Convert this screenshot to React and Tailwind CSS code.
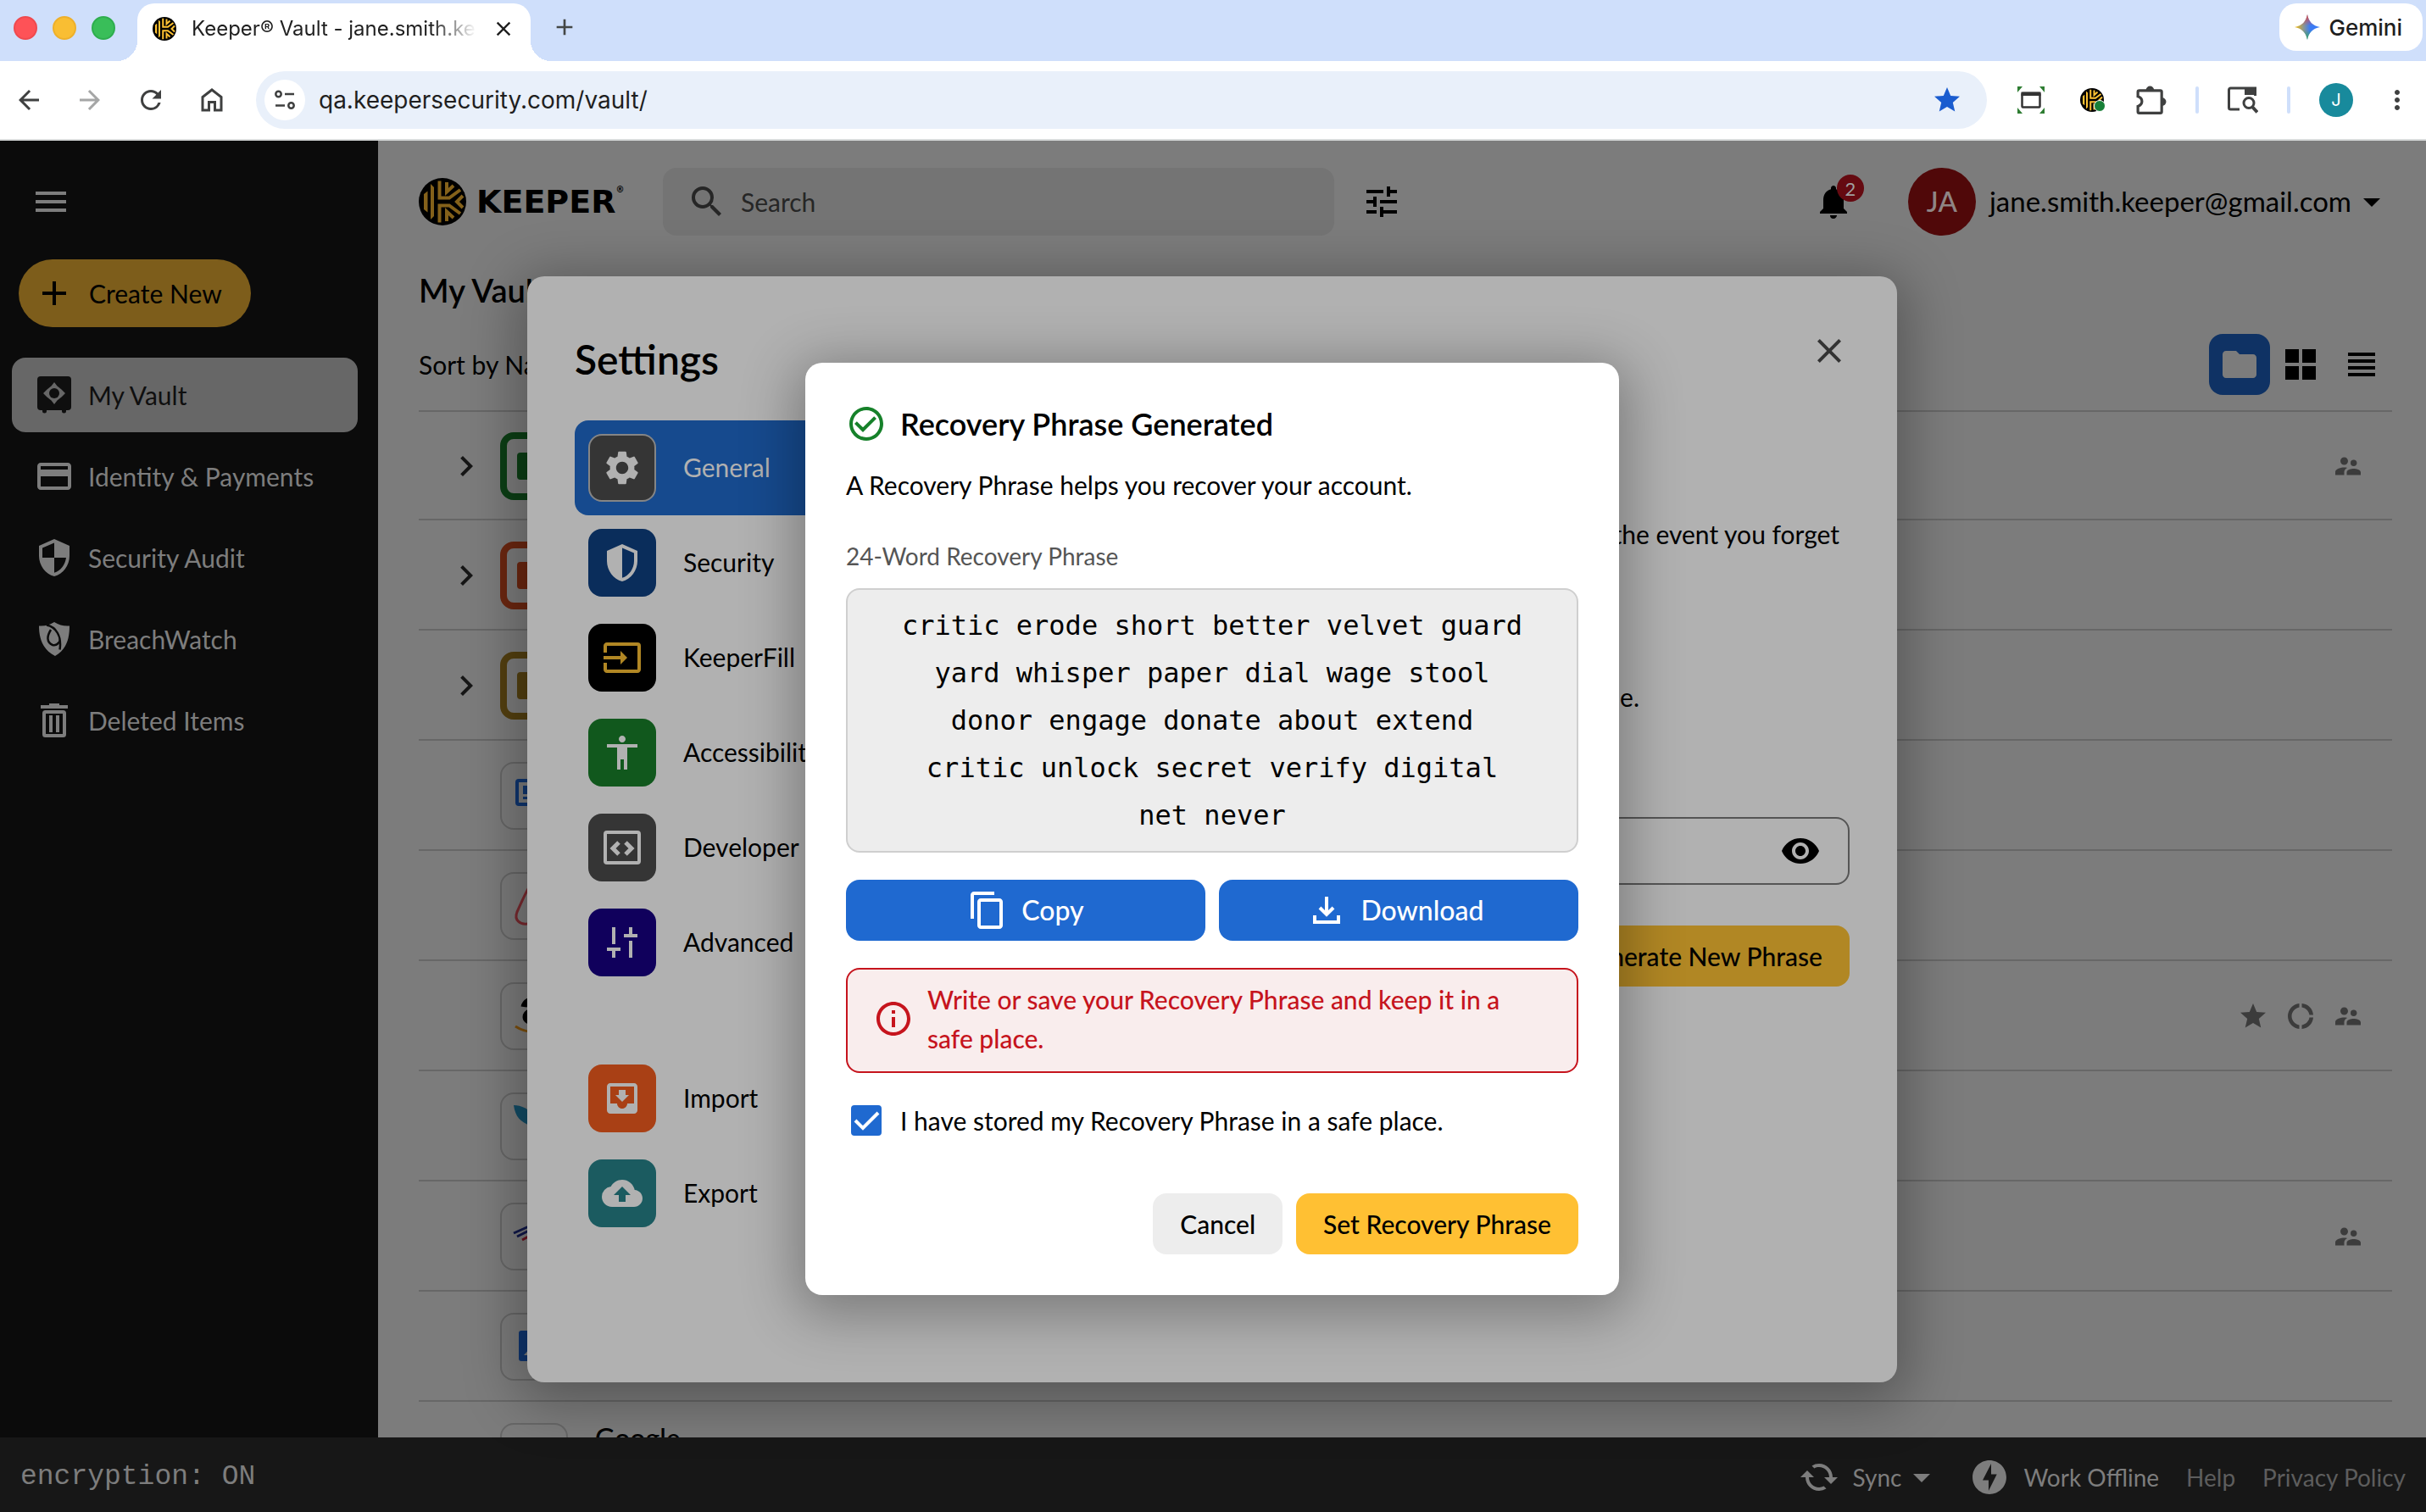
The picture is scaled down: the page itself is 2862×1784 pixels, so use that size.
import React, { useState } from 'react';
import {
  MdAccessibility,
  MdAdd,
  MdArrowBack,
  MdArrowDropDown,
  MdArrowForward,
  MdCached,
  MdCheckCircleOutline,
  MdChevronRight,
  MdClose,
  MdCloudUpload,
  MdContentCopy,
  MdCreditCard,
  MdDonutLarge,
  MdFolder,
  MdInfoOutline,
  MdInput,
  MdMenu,
  MdMoreVert,
  MdMoveToInbox,
  MdNotifications,
  MdOfflineBolt,
  MdOutlineExtension,
  MdRefresh,
  MdSearch,
  MdSecurity,
  MdSettings,
  MdStar,
  MdSupervisorAccount,
  MdTune,
  MdVisibility,
} from 'react-icons/md';

const PHRASE =
  'critic erode short better velvet guard yard whisper paper dial wage stool donor engage donate about extend critic unlock secret verify digital net never';

/* ---------- drawings ---------- */

function KeeperMark({ className, gold = '#ffc233' }) {
  return (
    <svg viewBox="0 0 56 56" className={className} aria-hidden="true">
      <circle cx="28" cy="28" r="28" fill="#000" />
      <path d="M6 19l4.500-3.500v25L6 37zM14 7l4 4v34l-4 4z" fill={gold} />
      <g fill="none" stroke={gold} strokeWidth="4">
        <path d="M24.500 3.500V23.500H36L49 14" />
        <path d="M24.500 52.500V32.500H36L49 42" />
        <path d="M33 5v11.500l8-7.500M33 51V39.500l8 7.500" />
        <path d="M52 21l-7 7 7 7" />
      </g>
    </svg>
  );
}

function VaultIcon({ className }) {
  return (
    <svg viewBox="0 0 40 44" className={className} aria-hidden="true">
      <rect width="40" height="40" rx="4" fill="currentColor" />
      <path d="M6 38h5v3a2 2 0 0 1-5 0zM29 38h5v3a2 2 0 0 1-5 0z" fill="currentColor" />
      <path d="M20 7l3.500 4.500 5 4 4.500 4.500-4.500 4.500-5 4L20 33l-3.500-4.500-5-4L7 20l4.500-4.500 5-4z" fill="#676767" />
      <circle cx="20" cy="20" r="6" fill="currentColor" />
    </svg>
  );
}

function BreachWatchIcon({ className }) {
  return (
    <svg viewBox="0 0 36 40" className={className} aria-hidden="true">
      <path d="M0 4.500C7 5 12 3.500 18 0c6 3.500 11 5 18 4.500C36 22 31 33 19 40 5 33 0 20 0 4.500z" fill="currentColor" />
      <path d="M9 3.500c11 2 18 13 15.500 29M14 9C9 17 9 24 16 27c5 1 8-2 8-7" fill="none" stroke="#0b0b0b" strokeWidth="2.500" />
      <path d="M18 13c4 2 6 6 5 10-3 2-7 0-7-4 0-2 1-4 2-6z" fill="currentColor" />
    </svg>
  );
}

function TrashIcon({ className }) {
  return (
    <svg viewBox="0 0 32 40" className={className} fill="none" stroke="currentColor" aria-hidden="true">
      <path d="M0 4h32" strokeWidth="4" />
      <path d="M10 1h12" strokeWidth="2" />
      <rect x="4" y="10" width="24" height="28" rx="1.500" strokeWidth="4" />
      <path d="M12 14v20M20 14v20" strokeWidth="4" />
    </svg>
  );
}

function HalfShieldIcon({ className }) {
  return (
    <svg viewBox="0 0 24 24" className={className} fill="currentColor" aria-hidden="true">
      <path d="M12 1L3 5v6c0 5.550 3.840 10.740 9 12 5.160-1.260 9-6.450 9-12V5l-9-4zm0 2.200l7 3.100V11c0 4.520-2.980 8.690-7 9.930V3.200z" />
    </svg>
  );
}

function DeveloperIcon({ className }) {
  return (
    <svg viewBox="0 0 44 40" className={className} fill="none" stroke="currentColor" strokeWidth="4" aria-hidden="true">
      <rect x="2" y="2" width="40" height="36" rx="2" />
      <path d="M18 14l-7 7 7 7M26 14l7 7-7 7" strokeWidth="5" />
    </svg>
  );
}

function SlidersIcon({ className }) {
  return (
    <svg viewBox="0 0 36 36" className={className} fill="currentColor" aria-hidden="true">
      <path d="M6 0h4v20H6zM0 24h16v4h-6v8H6v-8H0zM26 0h4v8h6v4H20V8h6zM26 16h4v20h-4z" />
    </svg>
  );
}

function DownloadIcon({ className }) {
  return (
    <svg viewBox="0 0 32 32" className={className} fill="none" stroke="currentColor" strokeWidth="4" aria-hidden="true">
      <path d="M16 0v20M8 13l8 8 8-8M2 22v8h28v-8" />
    </svg>
  );
}

function TabSearchIcon({ className }) {
  return (
    <svg viewBox="0 0 36 32" className={className} fill="none" stroke="currentColor" strokeWidth="3" aria-hidden="true">
      <path d="M14 27H3.500a2 2 0 0 1-2-2V4a2 2 0 0 1 2-2h29v9" />
      <path d="M20 1h14v9H20z" fill="currentColor" stroke="none" />
      <circle cx="25" cy="19.500" r="6" />
      <path d="M29 24l6 6.500" strokeWidth="4" />
    </svg>
  );
}

function CaptureIcon({ className }) {
  return (
    <svg viewBox="0 0 32 32" className={className} aria-hidden="true">
      <path d="M0 0h6L0 7zM32 0h-6l6 7zM0 32h6l-6-7zM32 32h-6l6-7z" fill="#2e7d32" />
      <rect x="5.500" y="8" width="21" height="16.500" rx="1" fill="none" stroke="#333" strokeWidth="2.500" />
      <path d="M4.500 6.500h23V11h-23z" fill="#333" />
    </svg>
  );
}

function SiteControlsIcon({ className }) {
  return (
    <svg viewBox="0 0 24 24" className={className} fill="none" stroke="currentColor" strokeWidth="2.500" aria-hidden="true">
      <circle cx="4.500" cy="5" r="3.200" />
      <path d="M12 5h11M1 18.500h11" />
      <circle cx="19.500" cy="18.500" r="3.200" />
    </svg>
  );
}

function PuzzleIcon({ className }) {
  return (
    <svg viewBox="0 0 34 34" className={className} aria-hidden="true">
      <path
        d="M3 6.500h24a1.500 1.500 0 0 1 1.500 1.500v22a1.500 1.500 0 0 1-1.500 1.500H3.500A1.500 1.500 0 0 1 2 30v-6c6-2 6-9 0-11V8a1.500 1.500 0 0 1 1.500-1.500z"
        fill="none"
        stroke="currentColor"
        strokeWidth="3"
      />
      <path d="M11 6a4.500 4.500 0 0 1 9 0zM29 14.500a4.500 4.500 0 0 1 0 9z" fill="currentColor" />
    </svg>
  );
}

function GeminiIcon({ className }) {
  return (
    <svg viewBox="0 0 30 30" className={className} aria-hidden="true">
      <defs>
        <linearGradient id="gemBase" x1="0" y1="0.500" x2="0.600" y2="0.500">
          <stop offset="0" stopColor="#fbbc04" />
          <stop offset="1" stopColor="#3b7cf5" />
        </linearGradient>
        <linearGradient id="gemTop" x1="0" y1="0" x2="0" y2="1">
          <stop offset="0" stopColor="#ea4335" />
          <stop offset="0.450" stopColor="#ea4335" stopOpacity="0" />
          <stop offset="0.600" stopColor="#34a853" stopOpacity="0" />
          <stop offset="1" stopColor="#34a853" />
        </linearGradient>
      </defs>
      <path d="M15 0c1.500 8.500 6.500 13.500 15 15-8.500 1.500-13.500 6.500-15 15C13.500 21.500 8.500 16.500 0 15 8.500 13.500 13.500 8.500 15 0z" fill="url(#gemBase)" />
      <path d="M15 0c1.500 8.500 6.500 13.500 15 15-8.500 1.500-13.500 6.500-15 15C13.500 21.500 8.500 16.500 0 15 8.500 13.500 13.500 8.500 15 0z" fill="url(#gemTop)" />
    </svg>
  );
}

/* ---------- browser chrome ---------- */

function BrowserBar() {
  return (
    <header className="font-['Inter',sans-serif] text-[#1f1f1f]">
      <div className="flex h-[72px] items-start bg-[#cfdffb] pr-1">
        <div className="flex h-[66px] w-[162px] shrink-0 items-center gap-[18px] pl-4">
          <button type="button" aria-label="Close window" className="size-7 rounded-full border-2 border-[#ef4a4f] bg-[#fe5257]" />
          <button type="button" aria-label="Minimize window" className="size-7 rounded-full border-2 border-[#eeb02b] bg-[#f9be33]" />
          <button type="button" aria-label="Zoom window" className="size-7 rounded-full border-2 border-[#2eae4e] bg-[#39be59]" />
        </div>
        <div className="relative mt-1 flex h-[68px] w-[464px] shrink-0 items-center rounded-t-[20px] bg-white pr-[18px] pb-2 pl-[18px]">
          <span className="absolute bottom-0 -left-6 size-6 bg-[radial-gradient(circle_at_0_0,transparent_24px,white_24px)]" />
          <span className="absolute -right-6 bottom-0 size-6 bg-[radial-gradient(circle_at_100%_0,transparent_24px,white_24px)]" />
          <KeeperMark className="size-7 shrink-0" />
          <span className="ml-[18px] w-[336px] overflow-hidden text-[24px] whitespace-nowrap [mask-image:linear-gradient(to_right,black_84%,transparent)]">
            Keeper® Vault - jane.smith.ke
          </span>
          <button type="button" aria-label="Close tab" className="ml-auto">
            <MdClose className="size-7" />
          </button>
        </div>
        <button type="button" aria-label="New tab" className="mt-4 ml-6 text-[#444746]">
          <MdAdd className="size-8" />
        </button>
        <button type="button" className="mt-1 ml-auto flex h-14 items-center gap-2.5 rounded-[20px] bg-white pr-6 pl-[18px] text-[26px] font-medium">
          <GeminiIcon className="size-[30px]" />
          Gemini
        </button>
      </div>

      <div className="flex h-[94px] items-center border-b-2 border-[#d9dbdb] bg-white pr-4 pl-4 text-[#3f4040]">
        <nav className="flex gap-9">
          <button type="button" aria-label="Back"><MdArrowBack className="size-9" /></button>
          <button type="button" aria-label="Forward" className="text-[#a5a6a6]"><MdArrowForward className="size-9" /></button>
          <button type="button" aria-label="Reload"><MdRefresh className="size-9" /></button>
          <button type="button" aria-label="Home" className="flex size-9 items-center justify-center">
            <svg viewBox="0 0 26 28" className="h-7" fill="none" stroke="currentColor" strokeWidth="3" aria-hidden="true">
              <path d="M2 26V10.500L13 2l11 8.500V26h-7.500V16.500h-7V26z" />
            </svg>
          </button>
        </nav>
        <div className="ml-[34px] flex h-[68px] flex-1 items-center rounded-full bg-[#e9f0fa] pr-[29px] pl-2.5">
          <button type="button" aria-label="View site information" className="flex size-12 shrink-0 items-center justify-center rounded-full bg-white">
            <SiteControlsIcon className="size-6" />
          </button>
          <input
            aria-label="Address"
            defaultValue="qa.keepersecurity.com/vault/"
            className="ml-4 min-w-0 flex-1 bg-transparent text-[28px] text-[#1f1f1f] outline-none"
          />
          <button type="button" aria-label="Bookmark this tab" className="text-[#1a5ccf]"><MdStar className="size-9" /></button>
        </div>
        <div className="ml-[34px] flex items-center gap-[34px]">
          <button type="button" aria-label="Capture page" className="flex w-9 justify-center"><CaptureIcon className="size-8" /></button>
          <button type="button" aria-label="Keeper extension" className="relative ml-0.5 flex w-9 justify-center">
            <KeeperMark className="size-7" />
            <span className="absolute right-0.5 bottom-0 size-3.5 rounded-full border border-white bg-[#188038]" />
          </button>
          <button type="button" aria-label="Extensions"><PuzzleIcon className="size-9" /></button>
          <span className="h-8 w-1 rounded-full bg-[#cfdffb]" />
          <button type="button" aria-label="Search tabs"><TabSearchIcon className="h-8 w-9" /></button>
          <span className="h-8 w-1 rounded-full bg-[#cfdffb]" />
          <button type="button" aria-label="Profile" className="flex size-10 items-center justify-center rounded-full bg-[#188a9c] text-xl text-white">J</button>
          <button type="button" aria-label="Menu"><MdMoreVert className="size-9" /></button>
        </div>
      </div>
    </header>
  );
}

/* ---------- vault ---------- */

const NAV = [
  { label: 'My Vault', icon: <VaultIcon className="h-11 w-10" />, active: true },
  { label: 'Identity & Payments', icon: <MdCreditCard className="size-12" /> },
  { label: 'Security Audit', icon: <MdSecurity className="size-12" /> },
  { label: 'BreachWatch', icon: <BreachWatchIcon className="h-10 w-9" /> },
  { label: 'Deleted Items', icon: <TrashIcon className="h-10 w-8" /> },
];

function Sidebar() {
  return (
    <aside className="w-[446px] shrink-0 bg-[#0b0b0b] text-[#7d7d7d]">
      <button type="button" aria-label="Menu" className="mt-12 ml-9 block">
        <MdMenu className="size-12" />
      </button>
      <button type="button" className="mt-11 ml-[22px] flex h-20 items-center gap-[17px] rounded-full bg-[#7d5d1b] pr-[34px] pl-[18px] text-[30px] text-black">
        <MdAdd className="size-12" />
        Create New
      </button>
      <nav className="mt-9 flex flex-col gap-2 px-3.5 pr-6">
        {NAV.map((item) => (
          <a
            key={item.label}
            href="#"
            className={
              item.active
                ? 'flex h-[88px] items-center gap-4 rounded-2xl bg-[#676767] pl-[26px] text-[30px] text-[#0f0f0f]'
                : 'flex h-[88px] items-center gap-4 rounded-2xl pl-[26px] text-[30px]'
            }
          >
            <span className="flex w-12 justify-center">{item.icon}</span>
            {item.label}
          </a>
        ))}
      </nav>
    </aside>
  );
}

const folderBox = 'flex size-20 items-center justify-center rounded-2xl border-8';

function Folder({ className, fill }) {
  return (
    <span className={className}>
      <svg viewBox="0 0 40 32" className="h-8 w-10" aria-hidden="true">
        <rect width="40" height="32" rx="4" fill={fill} />
        <circle cx="20" cy="16" r="5" fill="#7c7c7c" />
      </svg>
    </span>
  );
}

function Record({ children }) {
  return (
    <span className="block size-20 overflow-hidden rounded-2xl border-2 border-[#676767]">
      <svg viewBox="2 2 76 76" className="size-full" aria-hidden="true">{children}</svg>
    </span>
  );
}

const ROWS = [
  { id: 'green', folder: true, shared: true, icon: <Folder className={folderBox + ' border-[#0c3f15]'} fill="#0c3f15" /> },
  { id: 'orange', folder: true, icon: <Folder className={folderBox + ' border-[#6c2710]'} fill="#6c2710" /> },
  { id: 'gold', folder: true, icon: <Folder className={folderBox + ' border-[#544010]'} fill="#544010" /> },
  {
    id: 'note',
    icon: (
      <Record>
        <rect x="20" y="22" width="42" height="28" rx="2" fill="none" stroke="#0f3670" strokeWidth="4" />
        <path d="M27 28h12v10H27zM27 41h28v3H27z" fill="#0f3670" />
      </Record>
    ),
  },
  {
    id: 'airbnb',
    icon: (
      <Record>
        <path d="M40 10C34 14 26 34 20 47c-4 10 4 15 12 14 8-3 10-14 8-20-2 6 0 17 8 20 8 1 16-4 12-14C54 34 46 14 40 10z" fill="none" stroke="#7a2a2f" strokeWidth="3" />
      </Record>
    ),
  },
  {
    id: 'amazon',
    starred: true,
    usage: true,
    shared: true,
    icon: (
      <Record>
        <path d="M28 29c2-12 26-13 26 2v18M54 34c-16-2-24 1-24 7 0 8 18 8 24-3" fill="none" stroke="#000" strokeWidth="7" />
        <path d="M18 52c14 9 32 9 46 0" fill="none" stroke="#7d4f0c" strokeWidth="3" />
      </Record>
    ),
  },
  {
    id: 'bird',
    icon: (
      <Record>
        <path d="M16 15c8 0 20 4 26 16l-6 8c-12-4-18-10-20-24z" fill="#124c66" />
      </Record>
    ),
  },
  {
    id: 'bank',
    shared: true,
    icon: (
      <Record>
        <path d="M16 36l18-8M20 40l20-10" stroke="#10184a" strokeWidth="3" />
        <path d="M26 44l22-12" stroke="#6a1320" strokeWidth="3" />
      </Record>
    ),
  },
  {
    id: 'photos',
    icon: (
      <Record>
        <rect x="22" y="21" width="36" height="36" rx="3" fill="#0f3670" />
        <path d="M28 50l8-9 6 6 5-5 7 8z" fill="#7c7c7c" />
      </Record>
    ),
  },
  { id: 'google', name: 'Google', icon: <Record /> },
];

function VaultRow({ row }) {
  return (
    <li className="flex h-[130px] shrink-0 items-center border-t-2 border-[#676767] pt-0.5 pl-8 first:h-32">
      <span className="mr-4 flex w-12 justify-center text-[#161616]">{row.folder && <MdChevronRight className="size-12" />}</span>
      {row.icon}
      {row.name && <span className="mb-11 ml-8 text-[32px] font-medium text-black">{row.name}</span>}
      <span className="mr-[34px] ml-auto flex gap-5 text-[#3c3c3c]">
        {row.starred && <MdStar className="size-9" />}
        {row.usage && <MdDonutLarge className="size-9" />}
        {row.shared && <MdSupervisorAccount className="size-9" />}
      </span>
    </li>
  );
}

function VaultMain() {
  return (
    <main className="flex min-w-0 flex-1 flex-col overflow-hidden bg-[#7c7c7c] pt-8 pr-10 pl-12 text-black">
      <div className="flex h-20 shrink-0 items-center">
        <div className="flex w-[288px] items-center gap-3">
          <KeeperMark className="size-14" gold="#84611a" />
          <span className="flex items-start font-['DejaVu_Sans',sans-serif] text-[38px] leading-10 font-bold">
            KEEPER
            <span className="text-[10px] leading-3">®</span>
          </span>
        </div>
        <label className="flex h-20 w-[792px] items-center gap-4 rounded-2xl bg-[#747474] pl-7 text-[#262626]">
          <MdSearch className="size-12" />
          <input type="search" placeholder="Search" aria-label="Search" className="flex-1 bg-transparent text-[30px] outline-none placeholder:text-[#262626]" />
        </label>
        <button type="button" aria-label="Filter" className="ml-8"><MdTune className="size-12" /></button>
        <button type="button" aria-label="Notifications" className="relative ml-auto">
          <MdNotifications className="size-12" />
          <span className="absolute -top-2 -right-3 flex size-8 items-center justify-center rounded-full bg-[#650a11] text-[22px] text-[#a0a0a0]">2</span>
        </button>
        <button type="button" className="ml-16 flex items-center text-[33px]">
          <span className="mr-4 flex size-20 items-center justify-center rounded-full bg-[#500809] font-medium text-[#8f8585]">JA</span>
          jane.smith.keeper@gmail.com
          <MdArrowDropDown className="size-12" />
        </button>
      </div>
      <h1 className="mt-10 shrink-0 text-[38px] leading-[48px] font-semibold">My Vault</h1>
      <div className="mt-7 mb-[18px] flex shrink-0 items-center">
        <button type="button" className="text-[30px]">Sort by Name</button>
        <div className="ml-auto flex">
          <button type="button" aria-label="Folder view" className="flex size-[72px] items-center justify-center rounded-2xl bg-[#0f3264] text-[#7c7c7c]">
            <MdFolder className="size-12" />
          </button>
          <button type="button" aria-label="Grid view" className="flex size-[72px] items-center justify-center">
            <svg viewBox="0 0 36 36" className="size-9" aria-hidden="true"><path d="M0 0h16v16H0zM20 0h16v16H20zM0 20h16v16H0zM20 20h16v16H20z" /></svg>
          </button>
          <button type="button" aria-label="List view" className="flex size-[72px] items-center justify-center">
            <svg viewBox="0 0 32 28" className="h-7 w-8" aria-hidden="true"><path d="M0 0h32v4H0zM0 8h32v4H0zM0 16h32v4H0zM0 24h32v4H0z" /></svg>
          </button>
        </div>
      </div>
      <ul className="flex min-h-0 flex-1 flex-col overflow-hidden">
        {ROWS.map((row) => (
          <VaultRow key={row.id} row={row} />
        ))}
      </ul>
    </main>
  );
}

function Footer() {
  return (
    <footer className="flex h-[88px] shrink-0 items-center bg-[#171717] px-6 pt-1.5 text-[28px] text-[#7d7d7d]">
      <span className="font-['Liberation_Mono',monospace] text-[33px]">encryption: ON</span>
      <button type="button" className="ml-auto flex items-center">
        <MdCached className="mr-4 size-12 -scale-x-100" />
        Sync
        <MdArrowDropDown className="size-12" />
      </button>
      <button type="button" className="mr-8 ml-8 flex items-center gap-4">
        <MdOfflineBolt className="size-12" />
        Work Offline
      </button>
      <a href="#" className="mr-8 text-[#5d5d5d]">Help</a>
      <a href="#" className="text-[#5d5d5d]">Privacy Policy</a>
    </footer>
  );
}

/* ---------- settings ---------- */

const SETTINGS = [
  { label: 'General', tile: 'border-2 border-[#858585] bg-[#353535]', icon: <MdSettings className="size-12" />, active: true },
  { label: 'Security', tile: 'bg-[#0a2d5b]', icon: <HalfShieldIcon className="size-12" /> },
  { label: 'KeeperFill', tile: 'bg-black', icon: <MdInput className="size-12 text-[#b18724]" /> },
  { label: 'Accessibility', tile: 'bg-[#11581d]', icon: <MdAccessibility className="size-12" /> },
  { label: 'Developer', tile: 'bg-[#353535]', icon: <DeveloperIcon className="h-10 w-11" /> },
  { label: 'Advanced', tile: 'bg-[#10005c]', icon: <SlidersIcon className="size-9" /> },
];

const TRANSFER = [
  { label: 'Import', tile: 'bg-[#a94015]', icon: <MdMoveToInbox className="size-12" /> },
  { label: 'Export', tile: 'bg-[#1b5b60]', icon: <MdCloudUpload className="size-12" /> },
];

function SettingsLink({ item }) {
  return (
    <a
      href="#"
      className={
        item.active
          ? 'flex h-28 items-center gap-8 rounded-2xl bg-[#164a8e] px-4 text-[30px] text-[#b1b1b1]'
          : 'flex h-28 items-center gap-8 rounded-2xl px-4 text-[30px]'
      }
    >
      <span className={'flex size-20 items-center justify-center rounded-2xl text-[#b1b1b1] ' + item.tile}>{item.icon}</span>
      {item.label}
    </a>
  );
}

function SettingsModal() {
  return (
    <section role="dialog" aria-label="Settings" className="absolute inset-0 flex items-center justify-center pt-1.5 pr-0.5">
      <div className="flex min-h-[1305px] w-[1616px] max-w-full flex-col rounded-[20px] bg-[#b1b1b1] px-14 pt-[60px] text-black shadow-[0_12px_64px_12px_rgba(0,0,0,0.3)]">
        <div className="flex h-20 items-center justify-between">
          <h2 className="mb-1 text-[48px] font-semibold">Settings</h2>
          <button type="button" aria-label="Close" className="mb-6 text-[#333]"><MdClose className="size-12" /></button>
        </div>
        <div className="mt-[30px] flex">
          <nav className="w-[400px] shrink-0">
            {SETTINGS.map((item) => (
              <SettingsLink key={item.label} item={item} />
            ))}
            <div className="mt-[72px]">
              {TRANSFER.map((item) => (
                <SettingsLink key={item.label} item={item} />
              ))}
            </div>
          </nav>
          <div className="flex flex-1 flex-col items-end pt-[110px] text-[30px] leading-[48px]">
            <p className="pr-3">the event you forget</p>
            <p className="mt-36 pr-[248px]">e.</p>
            <label className="mt-[118px] flex h-20 w-[600px] items-center rounded-2xl border-2 border-[#555] pr-8 pl-6">
              <input type="password" aria-label="Recovery phrase" className="min-w-0 flex-1 bg-transparent outline-none" />
              <MdVisibility className="size-12" />
            </label>
            <button type="button" className="mt-12 flex h-[72px] items-center rounded-2xl bg-[#b18724] px-8 font-medium">
              Generate New Phrase
            </button>
          </div>
        </div>
      </div>
    </section>
  );
}

/* ---------- recovery phrase dialog ---------- */

function RecoveryDialog() {
  const [stored, setStored] = useState(true);

  return (
    <section role="dialog" aria-label="Recovery Phrase Generated" className="absolute inset-0 flex items-center justify-center pt-1.5 pr-0.5">
      <div className="w-[960px] max-w-full rounded-[20px] bg-white p-12 text-[30px] text-black shadow-[0_12px_64px_12px_rgba(0,0,0,0.3)]">
        <h2 className="flex h-12 items-center gap-4 text-[36px] font-semibold">
          <MdCheckCircleOutline className="size-12 text-[#16812a]" />
          Recovery Phrase Generated
        </h2>
        <p className="mt-6 leading-[48px]">A Recovery Phrase helps you recover your account.</p>
        <p className="mt-10 text-[28px] leading-10 text-[#555]">24-Word Recovery Phrase</p>
        <p className="mt-[18px] rounded-2xl border-2 border-[#cfcfcf] bg-[#ededed] px-14 py-3.5 text-center font-['DejaVu_Sans_Mono',monospace] text-[32px] leading-[56px]">
          {PHRASE}
        </p>
        <div className="mt-8 grid grid-cols-2 gap-4 text-[32px] font-medium text-white">
          <button type="button" className="flex h-[72px] items-center justify-center gap-4 rounded-2xl bg-[#1f69d0]">
            <MdContentCopy className="size-12" />
            Copy
          </button>
          <button type="button" className="flex h-[72px] items-center justify-center gap-6 rounded-2xl bg-[#1f69d0]">
            <DownloadIcon className="size-8" />
            Download
          </button>
        </div>
        <div role="alert" className="mt-8 flex items-center gap-4 rounded-2xl border-2 border-[#c6141d] bg-[#f9eded] px-[30px] pt-3 pb-4 font-medium text-[#c6141d]">
          <MdInfoOutline className="size-12 shrink-0" />
          <p className="leading-[46px]">Write or save your Recovery Phrase and keep it in a safe place.</p>
        </div>
        <label className="mt-8 flex h-12 items-center">
          <span className="ml-1.5 grid size-9">
            <input
              type="checkbox"
              checked={stored}
              onChange={(e) => setStored(e.target.checked)}
              className="col-start-1 row-start-1 size-9 appearance-none rounded-sm border-4 border-[#1f69d0] checked:bg-[#1f69d0]"
            />
            {stored && (
              <svg viewBox="0 0 36 36" className="pointer-events-none col-start-1 row-start-1 size-9" fill="none" stroke="#fff" strokeWidth="4" aria-hidden="true">
                <path d="M5 18l9 9L32 9" />
              </svg>
            )}
          </span>
          <span className="ml-[22px]">I have stored my Recovery Phrase in a safe place.</span>
        </label>
        <div className="mt-[62px] flex justify-end gap-4 font-medium">
          <button type="button" className="h-[72px] rounded-2xl bg-[#ededed] px-8">Cancel</button>
          <button type="button" className="h-[72px] rounded-2xl bg-[#ffc033] px-8">Set Recovery Phrase</button>
        </div>
      </div>
    </section>
  );
}

export default function App() {
  return (
    <div className="flex h-screen flex-col overflow-hidden">
      <BrowserBar />
      <div className="relative flex min-h-0 flex-1 flex-col font-['Lato',sans-serif]">
        <div className="flex min-h-0 flex-1">
          <Sidebar />
          <VaultMain />
        </div>
        <Footer />
        <SettingsModal />
        <RecoveryDialog />
      </div>
    </div>
  );
}
